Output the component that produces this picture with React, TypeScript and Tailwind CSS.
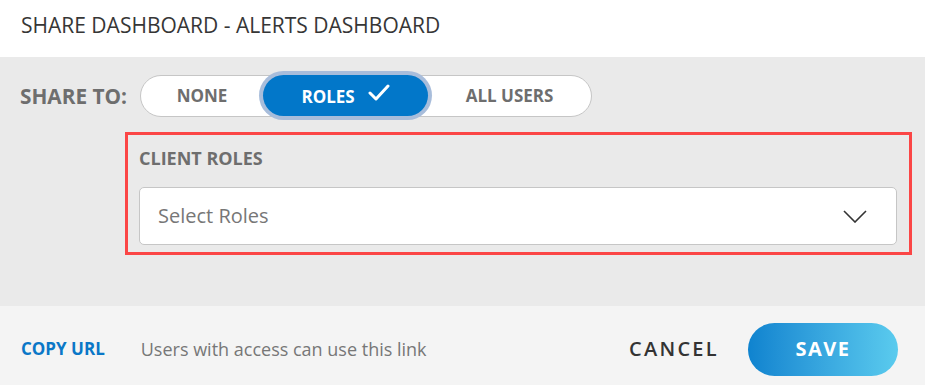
const OPTIONS = ["NONE", "ROLES", "ALL USERS"];

function CheckMark() {
  return (
    <svg width="22" height="17" viewBox="0 0 22 17" fill="none">
      <path d="M2 9 L8 15 L20 2" stroke="white" strokeWidth="3" strokeLinecap="round" strokeLinejoin="round" />
    </svg>
  );
}

function Chevron() {
  return (
    <svg width="24" height="13" viewBox="0 0 24 13" fill="none">
      <path d="M1 1 L12 12 L23 1" stroke="#333" strokeWidth="1.6" />
    </svg>
  );
}

export default function App() {
  const selected = "ROLES";

  return (
    <div className="w-[925px] h-[385px] flex flex-col bg-[#eaeaea] font-['Open_Sans',sans-serif]">
      {/* header */}
      <div className="h-[57px] bg-white flex items-center pl-[21px] shrink-0">
        <h1 className="text-[21px] text-[#363636] leading-none -mt-[7px]">
          SHARE DASHBOARD - ALERTS DASHBOARD
        </h1>
      </div>

      {/* body */}
      <div className="flex-1 flex flex-col pt-[18px]">
        <div className="flex items-center pl-[20px]">
          <span className="text-[20.8px] font-bold text-[#6e6e6e] mr-[13px] leading-none">SHARE TO:</span>
          <div className="flex items-center h-[42px] w-[452px] bg-white border border-[#c6c6c6] rounded-full">
            {OPTIONS.map((opt, i) =>
              opt === selected ? (
                <div
                  key={opt}
                  className="w-[165px] h-[41px] -mt-px shrink-0 rounded-full bg-[#0277c9] ring-4 ring-[#a8bddb] flex items-center justify-center gap-[13px] text-white text-[17px] font-bold"
                >
                  <span className="mt-[3px]">{opt}</span>
                  <span className="-mt-[7px]">
                    <CheckMark />
                  </span>
                </div>
              ) : (
                <div
                  key={opt}
                  className={
                    i === 0
                      ? "w-[122px] shrink-0 flex items-center justify-center text-[17px] font-bold text-[#6e6e6e]"
                      : "flex-1 flex items-center justify-center text-[17px] font-bold text-[#6e6e6e]"
                  }
                >
                  {opt}
                </div>
              )
            )}
          </div>
        </div>

        <div className="ml-[125px] mt-[15px] w-[787px] h-[123px] border-[3px] border-[#fb4646] pl-[11px] pt-[14px]">
          <div className="text-[18px] font-bold text-[#6e6e6e] leading-none">CLIENT ROLES</div>
          <div className="mt-[20px] h-[58px] w-[758px] bg-white border border-[#c6c6c6] rounded-[5px] flex items-center justify-between pl-[18px] pr-[29px]">
            <span className="text-[20px] text-[#777]">Select Roles</span>
            <Chevron />
          </div>
        </div>
      </div>

      {/* footer */}
      <div className="h-[79px] bg-[#f4f4f4] shrink-0 flex items-center pt-[7px] pl-[21px] pr-[27px]">
        <span className="text-[17px] font-bold text-[#0a77c7]">COPY URL</span>
        <span className="ml-[36px] text-[18px] text-[#777]">Users with access can use this link</span>
        <div className="ml-auto flex items-center">
          <button className="text-[20px] font-semibold text-[#333] tracking-[2.3px] mr-[29px]">CANCEL</button>
          <button className="w-[150px] h-[53px] rounded-full bg-gradient-to-r from-[#0e83cf] to-[#5acbee] text-white text-[20px] font-bold tracking-[1.5px]">
            SAVE
          </button>
        </div>
      </div>
    </div>
  );
}
